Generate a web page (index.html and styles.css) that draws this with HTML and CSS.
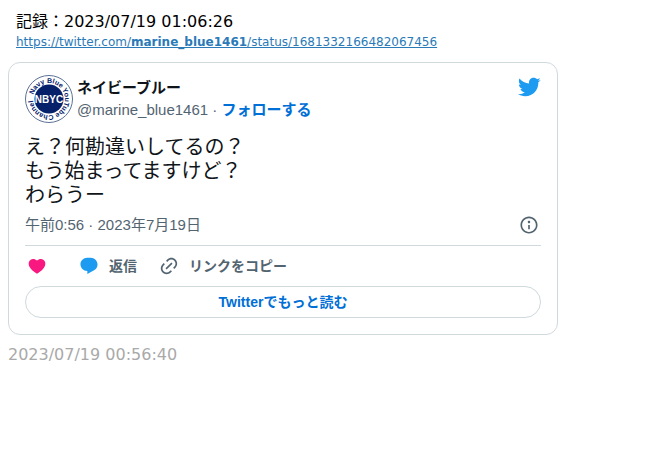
FILE: index.html
```html
<!DOCTYPE html>
<html lang="ja">
<head>
<meta charset="utf-8">
<meta name="viewport" content="width=device-width, initial-scale=1">
<title>ネイビーブルー</title>
<link rel="stylesheet" href="styles.css">
</head>
<body>
<header class="record">
  <div class="record-time">記録：2023/07/19 01:06:26</div>
  <a class="record-link" href="https://twitter.com/marine_blue1461/status/1681332166482067456">https://twitter.com/<b>marine_blue1461</b>/status/1681332166482067456</a>
</header>
<article class="card">
  <div class="card-head">
    <svg class="avatar" viewBox="0 0 48 48" aria-hidden="true">
      <defs>
        <path id="ring" d="M8.550 19.860A16 16 0 1 1 8.500 20.050"/>
      </defs>
      <circle cx="24" cy="24" r="23.500" fill="#fff" stroke="#5c7196" stroke-width="1"/>
      <circle cx="24" cy="24" r="14.500" fill="#06206a"/>
      <text class="avatar-ring"><textPath href="#ring">Navy Blue YouTube Channel</textPath></text>
      <text class="avatar-name" x="24" y="28">NBYC</text>
    </svg>
    <div class="author">
      <div class="author-name">ネイビーブルー</div>
      <div class="author-handle">@marine_blue1461 · <a class="follow" href="#">フォローする</a></div>
    </div>
    <svg class="bird" viewBox="0 0 24 24" aria-hidden="true"><path d="M23.643 4.937c-.835.37-1.732.62-2.675.733.962-.576 1.7-1.49 2.048-2.578-.9.534-1.897.922-2.958 1.13-.85-.904-2.06-1.47-3.4-1.47-2.572 0-4.658 2.086-4.658 4.66 0 .364.042.718.12 1.06-3.873-.195-7.304-2.05-9.602-4.868-.4.69-.63 1.49-.63 2.342 0 1.616.823 3.043 2.072 3.878-.764-.025-1.482-.234-2.11-.583v.06c0 2.257 1.605 4.14 3.737 4.568-.392.106-.803.162-1.227.162-.3 0-.593-.028-.877-.082.593 1.85 2.313 3.198 4.352 3.234-1.595 1.25-3.604 1.995-5.786 1.995-.376 0-.747-.022-1.112-.065 2.062 1.323 4.51 2.093 7.14 2.093 8.57 0 13.255-7.098 13.255-13.254 0-.2-.005-.402-.014-.602.91-.658 1.7-1.477 2.323-2.41z"/></svg>
  </div>
  <p class="message">え？何勘違いしてるの？<br>もう始まってますけど？<br>わらうー</p>
  <div class="meta">
    <time datetime="2023-07-19T00:56">午前0:56 · 2023年7月19日</time>
    <a class="info" href="#" aria-label="Info"><svg class="icon" viewBox="0 0 24 24" aria-hidden="true"><path d="M13.5 8.500c0 .83-.67 1.500-1.500 1.500s-1.500-.67-1.500-1.500S11.170 7 12 7s1.500.67 1.500 1.500zM13 17v-5h-2v5h2zm-1 5.250c5.660 0 10.250-4.590 10.250-10.250S17.660 1.750 12 1.750 1.750 6.340 1.750 12 6.340 22.250 12 22.250zM20.250 12c0 4.560-3.690 8.250-8.250 8.250S3.750 16.560 3.750 12 7.440 3.750 12 3.750s8.250 3.690 8.250 8.250z"/></svg></a>
  </div>
  <div class="actions">
    <button class="action like" type="button" aria-label="Like"><svg class="icon" viewBox="0 0 24 24" aria-hidden="true"><path d="M20.884 13.190c-1.351 2.480-4.001 5.120-8.379 7.670l-.503.3-.504-.3c-4.379-2.550-7.029-5.190-8.382-7.670-1.360-2.500-1.410-4.860-.514-6.670.887-1.790 2.647-2.910 4.601-3.010 1.651-.09 3.368.56 4.798 2.010 1.429-1.450 3.146-2.100 4.796-2.010 1.954.1 3.714 1.220 4.601 3.010.896 1.810.846 4.170-.514 6.670z"/></svg></button>
    <button class="action reply" type="button"><svg class="icon" viewBox="0 0 24 24" aria-hidden="true"><path d="M1.751 10c0-4.420 3.584-8 8.005-8h4.366c4.490 0 8.129 3.640 8.129 8.130 0 2.960-1.607 5.680-4.196 7.110l-8.054 4.460v-3.690h-.067c-4.490.1-8.183-3.510-8.183-8.010z"/></svg>返信</button>
    <button class="action" type="button"><svg class="icon" viewBox="0 0 24 24" aria-hidden="true"><path d="M18.360 5.640c-1.950-1.960-5.110-1.960-7.070 0L9.880 7.050 8.460 5.640l1.420-1.420c2.730-2.730 7.160-2.730 9.900 0 2.730 2.740 2.730 7.170 0 9.900l-1.420 1.420-1.410-1.420 1.410-1.410c1.960-1.960 1.960-5.120 0-7.070zm-2.120 3.530l-7.070 7.070-1.410-1.410 7.070-7.070 1.410 1.410zm-12.020.71l1.420-1.420 1.410 1.420-1.410 1.410c-1.960 1.960-1.960 5.120 0 7.070 1.950 1.960 5.110 1.960 7.070 0l1.410-1.410 1.420 1.410-1.420 1.420c-2.730 2.730-7.160 2.730-9.900 0-2.730-2.740-2.730-7.170 0-9.900z"/></svg>リンクをコピー</button>
  </div>
  <a class="more" href="#">Twitterでもっと読む</a>
</article>
<div class="posted">2023/07/19 00:56:40</div>
</body>
</html>
```
FILE: styles.css
```css
* {
  box-sizing: border-box;
}

body {
  margin: 8px;
  background: #fff;
  color: #000;
  font: 16px/24px "DejaVu Sans", "Noto Sans CJK JP", sans-serif;
}

.record {
  padding: 2px 8px 0;
}

.record-link {
  display: block;
  width: fit-content;
  color: #2a7ab8;
  font-size: 12px;
  line-height: 16px;
}

.card {
  max-width: 550px;
  margin-top: 12px;
  padding: 12px 16px 16px;
  border: 1px solid #cfd9de;
  border-radius: 12px;
  color: #0f1419;
  font-family: "Liberation Sans", "Noto Sans CJK JP", sans-serif;
}

.card-head {
  display: flex;
  gap: 4px;
}

.avatar {
  width: 48px;
  height: 48px;
}

.avatar-ring {
  fill: #06206a;
  font-size: 7px;
  font-weight: 700;
}

.avatar-name {
  fill: #fff;
  font-size: 10px;
  font-weight: 700;
  text-anchor: middle;
}

.author {
  flex: 1;
  padding-top: 2px;
  font-size: 15px;
  line-height: 22px;
}

.author-name {
  font-weight: 700;
}

.author-handle,
.meta {
  color: #536471;
}

.follow {
  color: #006fd6;
  font-weight: 700;
  text-decoration: none;
}

.bird {
  width: 24px;
  height: 24px;
  fill: #1d9bf0;
}

.message {
  margin: 12px 0 8px;
  font-size: 20px;
  line-height: 24px;
}

.meta {
  display: flex;
  align-items: center;
  justify-content: space-between;
  padding: 0 2px 10px 0;
  border-bottom: 1px solid #cfd9de;
  font-size: 15px;
  line-height: 20px;
}

.icon {
  display: block;
  width: 20px;
  height: 20px;
  fill: currentColor;
}

.info {
  color: inherit;
}

.actions {
  display: flex;
  gap: 22px;
  padding: 10px 2px;
}

.action {
  display: flex;
  align-items: center;
  gap: 10px;
  padding: 0;
  border: 0;
  background: none;
  color: #536471;
  font: inherit;
  font-size: 14px;
  font-weight: 700;
  line-height: 20px;
}

.like {
  padding-right: 10px;
}

.like .icon {
  fill: #f91880;
}

.reply .icon {
  fill: #1d9bf0;
}

.more {
  display: block;
  border: 1px solid #cfd9de;
  border-radius: 16px;
  color: #006fd6;
  font-size: 14px;
  font-weight: 700;
  line-height: 30px;
  text-align: center;
  text-decoration: none;
}

.posted {
  margin-top: 8px;
  color: #a9a9a9;
}
```
